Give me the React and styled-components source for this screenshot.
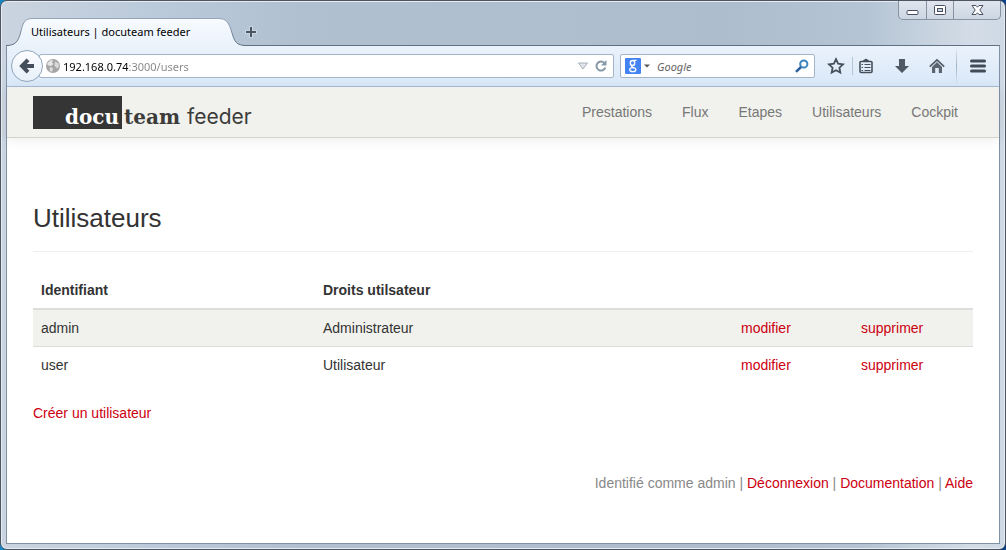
// src/App.jsx
import React, { useState } from "react";
import styled, { createGlobalStyle } from "styled-components";

const GlobalStyle = createGlobalStyle`
  *, *::before, *::after {
    box-sizing: border-box;
  }

  body {
    margin: 0;
    background: linear-gradient(90deg, #1686c4 0%, #08418a 100%);
    font-family: "Liberation Sans", Arial, sans-serif;
    font-size: 14px;
    line-height: 20px;
    color: #333;
  }

  button, input {
    font: inherit;
  }

  svg {
    flex: none;
  }
`;

// Window frame
const WindowFrame = styled.div`
  display: flex;
  flex-direction: column;
  min-height: 100vh;
  padding: 0 5px 5px;
  border: 1px solid #4f555e;
  border-radius: 7px;
  background: linear-gradient(
    90deg,
    #cbd4e0 0,
    #bccbdb 14%,
    #b1c0d0 30%,
    #aebdcd 72%,
    #b4c4d4 86%,
    #d4dde7 97%,
    #cdd9e5 100%
  );
  box-shadow: inset 0 0 0 1px #e6ecf3;
`;

const TitleBar = styled.header`
  display: flex;
  justify-content: space-between;
  align-items: flex-start;
  height: 44px;
`;

const TabStrip = styled.div`
  display: flex;
  align-items: center;
  margin-top: 17px;
`;

const Tab = styled.button`
  position: relative;
  z-index: 1;
  width: 240px;
  height: 28px;
  padding: 0 24px 0 25px;
  border: none;
  background: none;
  color: #000;
  font-family: "Noto Sans", "Open Sans", sans-serif;
  font-size: 11px;
  text-align: left;
  white-space: nowrap;
`;

const TabShape = styled.svg`
  position: absolute;
  inset: 0;
  z-index: -1;
`;

const IconButton = styled.button`
  display: flex;
  align-items: center;
  justify-content: center;
  flex: none;
  width: ${({ $width }) => $width || 20}px;
  height: 24px;
  padding: 0;
  border: none;
  background: none;
`;

const WindowControls = styled.div`
  display: flex;
  height: 19px;
  margin-right: -1px;
  border: 1px solid #8793a3;
  border-top: none;
  border-radius: 0 0 5px 5px;
  background: linear-gradient(#dfe5ee, #ccd6e2);
`;

const ControlButton = styled.button`
  display: flex;
  align-items: center;
  justify-content: center;
  width: ${({ $wide }) => ($wide ? 47 : 27)}px;
  padding: 0;
  border: none;
  border-left: ${({ $first }) => ($first ? "none" : "1px solid #8793a3")};
  background: none;
`;

// Browser toolbar
const BrowserBody = styled.div`
  display: flex;
  flex: 1;
  flex-direction: column;
  border: 1px solid #8191a5;
  border-top-color: #5f7084;
  background: #fff;
`;

const Toolbar = styled.div`
  display: flex;
  align-items: center;
  height: 41px;
  padding: 0 11px 0 4px;
  border-bottom: 1px solid #a5bdd7;
  background: linear-gradient(#eaf2fb, #dae8f8);
`;

const BackButton = styled.button`
  position: relative;
  z-index: 1;
  display: flex;
  align-items: center;
  justify-content: center;
  flex: none;
  width: 32px;
  height: 32px;
  padding: 0;
  border: 1px solid #91a5ba;
  border-radius: 50%;
  background: linear-gradient(#fcfdff, #e8f0f9);
`;

const Field = styled.div`
  display: flex;
  align-items: center;
  height: 24px;
  border: 1px solid #a2b5c9;
  border-radius: 2px;
  background: #fff;
  font-family: "Noto Sans", "Open Sans", sans-serif;
  font-size: 11px;
`;

const AddressField = styled(Field)`
  flex: 1;
  margin-left: -4px;
  padding: 0 2px 0 6px;
`;

const SearchField = styled(Field)`
  flex: none;
  width: 195px;
  margin: 0 11px 0 6px;
  padding: 0 2px 0 4px;
`;

const TextInput = styled.input`
  flex: 1;
  min-width: 0;
  height: 22px;
  padding: 0;
  border: none;
  outline: none;
  background: none;
`;

// The host is dark, the port and the path are dimmed
const AddressInput = styled(TextInput)`
  margin-left: 3px;
  background: linear-gradient(90deg, #000 65px, #858585 65px);
  background-clip: text;
  -webkit-background-clip: text;
  color: transparent;
`;

const SearchInput = styled(TextInput)`
  margin-left: 4px;

  &::placeholder {
    color: #666;
    font-style: italic;
    opacity: 1;
  }
`;

const Separator = styled.span`
  width: 1px;
  height: ${({ $tall }) => ($tall ? 38 : 18)}px;
  margin: ${({ $tall }) => ($tall ? "0 11px 0 9px" : "0 3px 0 6px")};
  background: ${({ $tall }) =>
    $tall ? "linear-gradient(transparent, #9fb2c6 50%, transparent)" : "#b4c5d7"};
`;

// Page
const SiteHeader = styled.header`
  display: flex;
  justify-content: space-between;
  align-items: center;
  height: 51px;
  padding: 0 26px;
  border-bottom: 1px solid #d2d3cf;
  background: #f1f2ed;
  box-shadow: 0 2px 12px rgba(0, 0, 0, 0.08);
`;

const Logo = styled.a`
  display: flex;
  height: 33px;
  color: #3c3c3b;
  font-family: "DejaVu Serif", serif;
  font-size: 20px;
  font-weight: 700;
  line-height: 42px;
  text-decoration: none;
`;

const LogoBlock = styled.span`
  width: 89px;
  padding-right: 3px;
  margin-right: 2px;
  background: #353535;
  color: #fff;
  text-align: right;
`;

const LogoProduct = styled.span`
  font-family: Inter, "Liberation Sans", sans-serif;
  font-size: 21px;
  font-weight: 400;
  line-height: 1;
`;

const Nav = styled.nav`
  display: flex;
`;

const NavLink = styled.a`
  padding: 15px;
  color: #777;
  text-decoration: none;
`;

const Content = styled.main`
  padding: 66px 26px 0;
`;

const PageTitle = styled.h1`
  margin: 0 0 20px;
  padding-bottom: 19px;
  border-bottom: 1px solid #eee;
  font-size: 26px;
  font-weight: 400;
  line-height: 28px;
`;

const Table = styled.table`
  width: 100%;
  margin-bottom: 20px;
  border-collapse: separate;
  border-spacing: 0;
  table-layout: fixed;
`;

const HeadCell = styled.th`
  width: ${({ $width }) => $width || "auto"};
  padding: 8px;
  border-bottom: 2px solid #ddd;
  text-align: left;
`;

const Row = styled.tr`
  &:nth-child(odd) {
    background: #f1f2ed;
  }

  & + & > td {
    border-top: 1px solid #ddd;
  }
`;

const Cell = styled.td`
  padding: 8px;
`;

const Link = styled.a`
  color: #cc0010;
  text-decoration: none;
`;

const Footer = styled.footer`
  padding: 50px 26px;
  color: #888;
  text-align: right;
`;

const navItems = ["Prestations", "Flux", "Etapes", "Utilisateurs", "Cockpit"];

const users = [
  { id: "admin", role: "Administrateur" },
  { id: "user", role: "Utilisateur" },
];

function BrowserTitleBar() {
  return (
    <TitleBar>
      <TabStrip>
        <Tab>
          <TabShape width="240" height="28" viewBox="0 0 240 28" aria-hidden="true">
            <defs>
              <linearGradient id="tabFill" x1="0" y1="0" x2="0" y2="1">
                <stop offset="0" stopColor="#f8fbff" />
                <stop offset="1" stopColor="#eaf2fb" />
              </linearGradient>
              <linearGradient id="tabStroke" x1="0" y1="0" x2="0" y2="1">
                <stop offset="0" stopColor="#93a4b8" />
                <stop offset="1" stopColor="#5f7084" />
              </linearGradient>
            </defs>
            <path
              d="M0 28V27.5C9 27.500 12 24 14.500 15C17 5 18 .5 27 .5H212C221 .5 223 5 226 15C228.500 24 231 27.500 240 27.500V28Z"
              fill="url(#tabFill)"
            />
            <path
              d="M0 27.500C9 27.500 12 24 14.500 15C17 5 18 .5 27 .5H212C221 .5 223 5 226 15C228.500 24 231 27.500 240 27.500"
              fill="none"
              stroke="url(#tabStroke)"
            />
          </TabShape>
          Utilisateurs | docuteam feeder
        </Tab>
        <IconButton $width={10} aria-label="Nouvel onglet">
          <svg width="12" height="12" viewBox="0 0 12 12">
            <path d="M6 0V12M0 6H12" stroke="#c9d5e2" strokeWidth="4" />
            <path d="M6 1V11M1 6H11" stroke="#4a5664" strokeWidth="2" />
          </svg>
        </IconButton>
      </TabStrip>
      <WindowControls>
        <ControlButton $first aria-label="Réduire">
          <svg width="13" height="14" viewBox="0 0 13 14">
            <rect x="1" y="7.500" width="11" height="4" rx="1" fill="#fff" stroke="#4a5062" />
          </svg>
        </ControlButton>
        <ControlButton aria-label="Agrandir">
          <svg width="12" height="12" viewBox="0 0 12 12">
            <rect x=".5" y="1.500" width="11" height="9" rx="1" fill="#fff" stroke="#4a5062" />
            <rect x="3.500" y="4.500" width="5" height="3" fill="#cbd6e3" stroke="#4a5062" />
          </svg>
        </ControlButton>
        <ControlButton $wide aria-label="Fermer">
          <svg width="13" height="12" viewBox="0 0 13 12">
            <path
              d="M1 1.500H5L6.500 3.200L8 1.500H12L8.800 6L12 10.500H8L6.500 8.800L5 10.500H1L4.200 6Z"
              fill="#fff"
              stroke="#4a5062"
            />
          </svg>
        </ControlButton>
      </WindowControls>
    </TitleBar>
  );
}

function BrowserToolbar() {
  const [address, setAddress] = useState("192.168.0.74:3000/users");
  const [query, setQuery] = useState("");

  return (
    <Toolbar>
      <BackButton aria-label="Page précédente">
        <svg width="16" height="16" viewBox="0 0 16 16">
          <path d="M9 1.800L3 8L9 14.200M3 8H15" fill="none" stroke="#454f5b" strokeWidth="4" />
        </svg>
      </BackButton>
      <AddressField>
        <svg width="14" height="14" viewBox="0 0 14 14" aria-hidden="true">
          <circle cx="7" cy="7" r="7" fill="#a5a5a5" />
          <path d="M1 5L4 1.500L7 1L6 3.500L7.500 5L5 7L2.500 6.500Z" fill="#e6e6e6" />
          <path d="M4 8L7 9L6.500 12L5 13L3.500 11ZM9 2.500L12 4L13 7L11.500 9.500L10 8.500L8.500 6.500Z" fill="#dadada" />
        </svg>
        <AddressInput
          aria-label="Adresse"
          value={address}
          onChange={(e) => setAddress(e.target.value)}
        />
        <IconButton $width={16} aria-label="Historique">
          <svg width="10" height="8" viewBox="0 0 10 8">
            <path d="M.5 1H9.500L5 7Z" fill="#e0e4e8" stroke="#a7b0b9" />
          </svg>
        </IconButton>
        <IconButton aria-label="Actualiser">
          <svg width="12" height="12" viewBox="0 0 12 12">
            <path d="M9.300 3A4.500 4.500 0 1 0 10.300 7.500" fill="none" stroke="#8798a8" strokeWidth="2" />
            <path d="M11.500 0V5.500H6Z" fill="#8798a8" />
          </svg>
        </IconButton>
      </AddressField>
      <SearchField>
        <svg width="16" height="16" viewBox="0 0 16 16" aria-hidden="true">
          <rect width="16" height="16" rx="1" fill="#4384f2" />
          <g fill="none" stroke="#fff">
            <ellipse cx="7.500" cy="5" rx="2.200" ry="2.500" strokeWidth="1.400" />
            <path d="M8.500 2.300H11.500M8 7.500C5.500 8.500 7 9.300 9 9.800" strokeWidth="1.200" />
            <ellipse cx="7.800" cy="11.700" rx="3" ry="2" strokeWidth="1.300" />
          </g>
        </svg>
        <IconButton $width={12} aria-label="Choisir le moteur">
          <svg width="6" height="4" viewBox="0 0 6 4">
            <path d="M0 .5H6L3 3.500Z" fill="#555" />
          </svg>
        </IconButton>
        <SearchInput
          aria-label="Recherche"
          placeholder="Google"
          value={query}
          onChange={(e) => setQuery(e.target.value)}
        />
        <IconButton aria-label="Rechercher">
          <svg width="14" height="14" viewBox="0 0 14 14">
            <circle cx="8.800" cy="5" r="3.600" fill="none" stroke="#3b86c0" strokeWidth="2" />
            <path d="M6 8L1 12.800" stroke="#2c5f9e" strokeWidth="2.500" />
          </svg>
        </IconButton>
      </SearchField>
      <IconButton aria-label="Marquer cette page">
        <svg width="18" height="18" viewBox="0 0 18 18">
          <path
            d="M9 2.200L11.100 6.700L16 7.300L12.400 10.700L13.300 15.600L9 13.200L4.700 15.600L5.600 10.700L2 7.300L6.900 6.700Z"
            fill="none"
            stroke="#46505c"
            strokeWidth="1.800"
          />
        </svg>
      </IconButton>
      <Separator />
      <IconButton aria-label="Marque-pages">
        <svg width="16" height="16" viewBox="0 0 16 16">
          <rect x="2" y="3.500" width="12" height="11" rx="1" fill="none" stroke="#46505c" strokeWidth="1.600" />
          <path d="M5 3C5 2 6 2 6.500 1.500Q8 0 9.500 1.500C10 2 11 2 11 3V4H5Z" fill="#46505c" />
          <path d="M3.500 6.500H5M6.500 6.500H12.500M3.500 9.500H5M6.500 9.500H12.500M3.500 12.500H5M6.500 12.500H12.500" stroke="#46505c" />
        </svg>
      </IconButton>
      <IconButton $width={51} aria-label="Téléchargements">
        <svg width="14" height="14" viewBox="0 0 14 14">
          <path d="M4 0H10V7H14L7 14L0 7H4Z" fill="#4f5966" />
        </svg>
      </IconButton>
      <IconButton aria-label="Accueil">
        <svg width="16" height="16" viewBox="0 0 16 16">
          <path d="M.8 8.700L8 1.800L15.200 8.700" fill="none" stroke="#4f5966" strokeWidth="1.600" />
          <path d="M8 4L13 9V15H9.800V10H6.200V15H3V9Z" fill="#5b6572" />
        </svg>
      </IconButton>
      <Separator $tall />
      <IconButton aria-label="Menu">
        <svg width="16" height="14" viewBox="0 0 16 14">
          <path d="M1.500 2H14.500M1.500 7H14.500M1.500 12H14.500" stroke="#414b57" strokeWidth="3" strokeLinecap="round" />
        </svg>
      </IconButton>
    </Toolbar>
  );
}

export default function App() {
  return (
    <>
      <GlobalStyle />
      <WindowFrame>
        <BrowserTitleBar />
        <BrowserBody>
          <BrowserToolbar />
          <SiteHeader>
            <Logo href="#">
              <LogoBlock>docu</LogoBlock>
              <span>
                team <LogoProduct>feeder</LogoProduct>
              </span>
            </Logo>
            <Nav>
              {navItems.map((item) => (
                <NavLink key={item} href="#">
                  {item}
                </NavLink>
              ))}
            </Nav>
          </SiteHeader>
          <Content>
            <PageTitle>Utilisateurs</PageTitle>
            <Table>
              <thead>
                <tr>
                  <HeadCell $width="30%">Identifiant</HeadCell>
                  <HeadCell>Droits utilsateur</HeadCell>
                  <HeadCell $width="120px" />
                  <HeadCell $width="120px" />
                </tr>
              </thead>
              <tbody>
                {users.map((user) => (
                  <Row key={user.id}>
                    <Cell>{user.id}</Cell>
                    <Cell>{user.role}</Cell>
                    <Cell>
                      <Link href="#">modifier</Link>
                    </Cell>
                    <Cell>
                      <Link href="#">supprimer</Link>
                    </Cell>
                  </Row>
                ))}
              </tbody>
            </Table>
            <Link href="#">Créer un utilisateur</Link>
          </Content>
          <Footer>
            Identifié comme admin | <Link href="#">Déconnexion</Link> |{" "}
            <Link href="#">Documentation</Link> | <Link href="#">Aide</Link>
          </Footer>
        </BrowserBody>
      </WindowFrame>
    </>
  );
}
